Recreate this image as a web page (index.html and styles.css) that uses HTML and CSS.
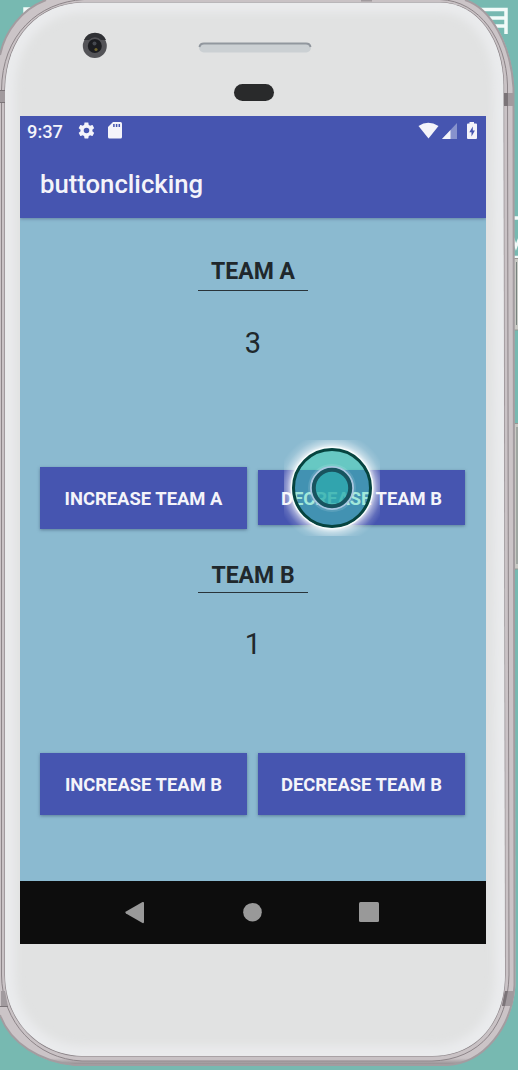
FILE: index.html
```html
<!DOCTYPE html>
<html lang="en">
<head>
<meta charset="utf-8">
<title>buttonclicking</title>
<link rel="stylesheet" href="styles.css">
</head>
<body>
<svg class="device" viewBox="0 0 518 1070" aria-hidden="true">
  <defs>
    <linearGradient id="bottomMetal" x1="0" y1="0" x2="0" y2="1"><stop offset="0" stop-color="#8e898c" stop-opacity="0"/><stop offset=".993" stop-color="#8e898c" stop-opacity="0"/><stop offset="1" stop-color="#898386"/></linearGradient>
    <filter id="soft" x="-10%" y="-10%" width="120%" height="120%"><feGaussianBlur stdDeviation="4"/></filter>
    <filter id="fine"><feGaussianBlur stdDeviation=".6"/></filter>
    <clipPath id="faceClip"><path d="M82 2.500H440C478 3 503 40 503.500 85L505 975C505 1018 480 1056 432 1056H82C38 1055 5 1020 5 975V90C6 35 40 4 82 2.500Z"/></clipPath>
  </defs>
  <g fill="none" stroke="#f2fbf9" stroke-width="3.500" filter="url(#fine)">
    <path d="M25 24V9H46M470 9.500H506V34M484 18H505M494 26H505M512 218H518"/>
    <path d="M513 238L516 247L519 239M512 257H518" stroke-width="2.500"/>
  </g>
  <g fill="#c8c9c4" stroke="#969692">
    <path d="M512 258.500H520V330H512ZM512 423.500H520V569H512Z"/>
    <path d="M516.500 262V325M517 427V564" stroke="#77827e"/>
  </g>
  <path d="M46 0C22 9 5 31 0 55L-6 100V990L0 1015C10 1043 40 1063 75 1065.500H446C484 1064 513 1027 515.500 985L514 88C512 45 492 8 466 0Z" fill="#cbc4c7"/>
  <path d="M46 0C22 9 5 31 0 55L-6 100V990L0 1015C10 1043 40 1063 75 1065.500H446C484 1064 513 1027 515.500 985L514 88C512 45 492 8 466 0Z" fill="url(#bottomMetal)"/>
  <path d="M465 0C491 8 511 45 513.500 88L514.500 985C512 1027 484 1064 446 1065H75C40 1062 10 1043 0 1015M46 0C22 9 5 31 0 55" fill="none" stroke="#a39ca0" stroke-width="2"/>
  <path d="M84 -.5H440C480 1 506 40 507.500 85L509 975C508 1025 480 1060 432 1061H82C36 1059 2 1022 1.500 975V90C2 35 38 2 84 -.5Z" fill="#c9c2c5" stroke="#8d8589"/>
  <path d="M82 2.500H440C478 3 503 40 503.500 85L505 975C505 1018 480 1056 432 1056H82C38 1055 5 1020 5 975V90C6 35 40 4 82 2.500Z" fill="#e1e2e2" stroke="#898286" stroke-width="1.200"/>
  <g clip-path="url(#faceClip)"><path d="M82 2.500H440C478 3 503 40 503.500 85L505 975C505 1018 480 1056 432 1056H82C38 1055 5 1020 5 975V90C6 35 40 4 82 2.500Z" fill="none" stroke="#eaebed" stroke-width="20" filter="url(#soft)"/></g>
  <g fill="#a19a9e"><path d="M0 90H5V102H0ZM504 93H514V106H504ZM361 0H372V1.500H361Z"/><path d="M1 991H5L8 1007H1ZM505 991H514L512 1006H502Z"/></g>
  <g fill="#7b7478"><path d="M0 90H5V91H0ZM0 102H5V103H0ZM504 93H508V106H504ZM0 1006H8V1007H0ZM505 991H508L505 1006H502Z"/></g>
  <circle cx="94.800" cy="46" r="12" fill="#535357"/><path d="M84 40A12 12 0 0 1 106 40L101 40A8 8 0 0 0 89 40Z" fill="#303135"/><circle cx="94.800" cy="46" r="7" fill="#1c1d21"/><circle cx="94.500" cy="43.500" r="2" fill="#45484f"/><circle cx="96" cy="49.500" r="1.600" fill="#71652c"/>
  <rect x="199" y="43" width="112" height="9.500" rx="4.700" fill="#cbd0d3"/><path d="M199.500 47Q200 43.500 204 43.500H306Q310 43.500 310.500 47" fill="none" stroke="#91979e" stroke-width="2"/>
  <rect x="234" y="84" width="40" height="17" rx="8.500" fill="#292a2b"/>
</svg>
<main class="screen">
  <header class="app-header">
    <div class="status">
      <span class="time">9:37</span>
      <svg class="gear" width="19" height="19" viewBox="0 0 24 24"><path fill="#f4f4fa" fill-rule="evenodd" d="M19.400 13a8 8 0 0 0 0-2l2.100-1.700c.2-.1.200-.4.100-.6l-2-3.500c-.1-.2-.4-.3-.6-.2l-2.500 1a7 7 0 0 0-1.700-1l-.4-2.600c0-.2-.2-.4-.5-.4h-4c-.2 0-.5.200-.5.400L9 5a8 8 0 0 0-1.700 1l-2.500-1c-.2-.1-.5 0-.6.200l-2 3.500c-.1.200-.1.500.1.600L4.500 11a8 8 0 0 0 0 2l-2.200 1.700c-.1.100-.2.400-.1.600l2 3.500c.1.200.4.300.6.200l2.500-1a8 8 0 0 0 1.700 1l.4 2.600c0 .2.200.4.500.4h4c.2 0 .5-.2.500-.4l.4-2.600a8 8 0 0 0 1.700-1l2.500 1c.2.100.5 0 .6-.2l2-3.500c.1-.2.100-.5-.1-.6ZM12 15.500a3.500 3.500 0 1 1 0-7 3.500 3.500 0 0 1 0 7Z"/></svg>
      <svg class="card" width="14" height="17" viewBox="0 0 14 17"><path fill="#f4f4fa" d="M5 0H12.500Q14 0 14 1.500V15Q14 16.500 12.500 16.500H1.500Q0 16.500 0 15V5Z"/><path d="M5.900 2V5M8.600 2V5M11.300 2V5" stroke="#4655b0" stroke-width="1.500"/></svg>
      <svg class="signals" width="60" height="18" viewBox="0 0 60 18"><path fill="#f4f4fa" d="M.5 4Q10 -2.500 20.500 4L10.500 16.500Z"/><path fill="#8792cc" d="M39 1V17H24Z"/><path fill="#f4f4fa" d="M32.500 8V17H24Z"/><path fill="#f4f4fa" d="M49 2.500Q49 1.500 50 1.500H51.500V0H56V1.500H58Q59 1.500 59 2.500V16Q59 17 58 17H50Q49 17 49 16Z"/><path fill="#4655b0" d="M54.800 4.500L51.300 10.300H53.500V14.500L56.900 8.500H54.800Z"/></svg>
    </div>
    <h1 class="title">buttonclicking</h1>
  </header>
  <section class="team team-a">
    <h2 class="name">TEAM A</h2>
    <p class="score">3</p>
    <div class="actions">
      <button class="btn">INCREASE TEAM A</button>
      <button class="btn short">DECREASE TEAM B</button>
    </div>
  </section>
  <section class="team team-b">
    <h2 class="name">TEAM B</h2>
    <p class="score">1</p>
    <div class="actions">
      <button class="btn">INCREASE TEAM B</button>
      <button class="btn">DECREASE TEAM B</button>
    </div>
  </section>
  <nav class="nav">
    <svg width="466" height="63" viewBox="0 0 466 63"><g fill="#999"><path d="M106 30.500L122.500 21Q124 20.500 124 22V41Q124 42.500 122.500 42L106 32.500Q104.500 31.500 106 30.500Z"/><circle cx="232.500" cy="31.200" r="9.300"/><rect x="339" y="21" width="20" height="20" rx="1.500"/></g></svg>
  </nav>
</main>
<svg class="pointer" width="96" height="96" viewBox="0 0 96 96" aria-hidden="true">
  <defs><radialGradient id="halo" gradientUnits="userSpaceOnUse" cx="48" cy="48" r="56"><stop offset=".72" stop-color="#fff" stop-opacity=".85"/><stop offset=".8" stop-color="#fff" stop-opacity=".45"/><stop offset=".9" stop-color="#fff" stop-opacity=".14"/><stop offset="1" stop-color="#fff" stop-opacity="0"/></radialGradient></defs>
  <path fill="url(#halo)" fill-rule="evenodd" d="M0 0H96V96H0ZM48 8a40 40 0 1 0 0 80a40 40 0 1 0 0-80Z"/>
  <circle cx="48" cy="48" r="38.500" fill="#3edbb5" fill-opacity=".46"/>
  <circle cx="48" cy="48" r="24" fill="#fff" fill-opacity=".12"/>
  <circle cx="48" cy="48" r="40.500" fill="none" stroke="#f5fbfc" stroke-width="2"/>
  <circle cx="48" cy="48" r="38.500" fill="none" stroke="#06443f" stroke-width="3"/>
  <circle cx="48" cy="48" r="21" fill="none" stroke="#a9c6e0" stroke-width="2"/>
  <circle cx="48" cy="48" r="18.200" fill="#21a6a8" fill-opacity=".7" stroke="#18535f" stroke-width="4"/>
</svg>
</body>
</html>
```
FILE: styles.css
```css
* { box-sizing: border-box; }
body { margin: 0; width: 518px; height: 1070px; overflow: hidden; position: relative; background: #77b9b1; font-family: Roboto, sans-serif; padding: 116px 0 0 20px; }
svg { display: block; }
.device { position: absolute; inset: 0; width: 518px; height: 1070px; }
.screen { position: relative; width: 466px; height: 828px; background: #8bbad0; display: flex; flex-direction: column; overflow: hidden; }
.app-header { height: 102px; flex: none; background: #4655b0; color: #f4f4fa; box-shadow: 0 1px 3px #45557b88; }
.status { height: 32px; padding: 0 8px 0 7px; display: flex; align-items: center; }
.time { font-size: 18.3px; font-weight: 500; width: 50px; margin-top: -2px; }
.card { margin-left: 12px; margin-top: -3px; }
.gear { margin-top: -3px; }
.signals { margin-left: auto; margin-top: -3px; }
.title { margin: 20px 0 0 20px; font-size: 25.7px; line-height: 32px; font-weight: 500; }
.team { display: flex; flex-direction: column; align-items: center; color: #20282c; }
.team-a { height: 311px; flex: none; padding-top: 39px; }
.team-b { height: 352px; flex: none; padding-top: 32px; }
.name { margin: 0; width: 110px; height: 34px; border-bottom: 1px solid #29343a; text-align: center; font-size: 23px; line-height: 29px; font-weight: 700; }
.team-b .name { height: 32px; }
.score { margin: 34px 0 0; font-size: 29px; line-height: 36px; font-weight: 400; }
.team-b .score { margin-top: 33px; }
.actions { margin: auto 1px 0 0; width: 425px; display: flex; align-items: flex-start; justify-content: space-between; }
.team-b .actions { margin-top: 91px; }
.btn { width: 207px; height: 62px; padding: 1px 0 0; border: 0; background: #4655b0; color: #f4f4fa; font: 700 18.4px/20px Roboto, sans-serif; box-shadow: 0 1px 3px #34496788; }
.short { height: 55px; margin-top: 3px; padding-top: 2px; }
.nav { height: 63px; flex: none; background: #0d0d0d; }
.pointer { position: absolute; left: 284px; top: 440px; }
```
